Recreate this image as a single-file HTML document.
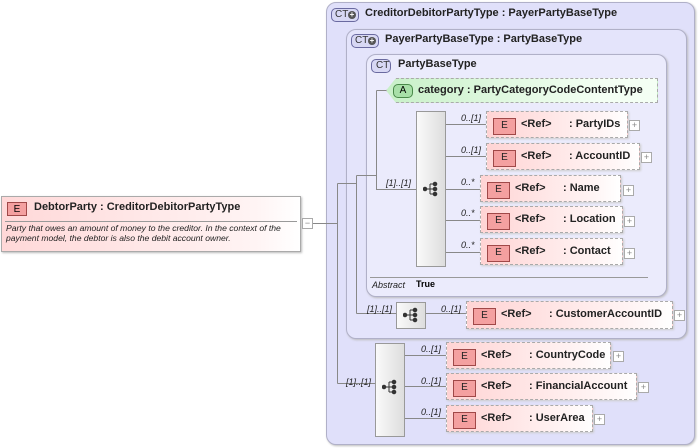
<!DOCTYPE html>
<html><head><meta charset="utf-8"><style>
body{margin:0;width:698px;height:448px;background:#fff;position:relative;overflow:hidden;font-family:"Liberation Sans",sans-serif;}
.a{position:absolute;box-sizing:border-box}
.ct{border:1px solid #b0b0c8;border-radius:10px;box-shadow:1px 1px 2px #bbb}
.ttl{font-size:11px;font-weight:bold;color:#222;position:absolute;white-space:nowrap}
.badge{position:absolute;border:1px solid #6a6aa0;border-radius:5px;background:#d8d8f4;font-size:10px;color:#333;line-height:12px;height:14px;padding-left:3px;box-sizing:border-box}
.badge i{position:absolute;right:2px;top:2px;width:8px;height:8px;border-radius:50%;background:#555;color:#fff;font-style:normal;font-size:8px;line-height:8px;text-align:center;font-weight:bold}
.el{border:1px dashed #aaa;background:linear-gradient(90deg,#ffd4d4,#fff4f4 80%,#fff);font-size:11px;font-weight:bold;color:#222;box-shadow:1px 1px 2px #ccc}
.E{position:absolute;left:6px;top:6px;width:21px;height:15px;border:1px solid #a04848;background:#f4a0a0;font-size:10px;font-weight:normal;text-align:center;line-height:14px;color:#222}
.el .r{position:absolute;left:34px;top:6px}
.el .n{position:absolute;top:6px;white-space:nowrap}
.plus{position:absolute;width:9px;height:9px;border:1px solid #aaa;background:#fff;font-size:9px;line-height:8px;text-align:center;color:#888}
.card{position:absolute;font-size:9px;font-style:italic;color:#222}
.seq{border:1px solid #999;background:linear-gradient(90deg,#fafafa,#ddd)}
</style></head><body>
<div class="a ct" style="left:326px;top:2px;width:369px;height:443px;background:#e0e0fa"></div>
<div class="badge" style="left:331px;top:8px;width:28px">CT<i>+</i></div>
<div class="ttl" style="left:365px;top:7px">CreditorDebitorPartyType : PayerPartyBaseType</div>
<div class="a ct" style="left:346px;top:29px;width:341px;height:310px;background:#e4e4fb"></div>
<div class="badge" style="left:351px;top:34px;width:28px">CT<i>+</i></div>
<div class="ttl" style="left:385px;top:33px">PayerPartyBaseType : PartyBaseType</div>
<div class="a ct" style="left:366px;top:54px;width:301px;height:243px;background:#ebebfc"></div>
<div class="badge" style="left:371px;top:59px;width:20px;padding-left:4px">CT</div>
<div class="ttl" style="left:398px;top:58px">PartyBaseType</div>
<div class="a" style="left:370px;top:277px;width:278px;height:1px;background:#999"></div>
<div class="card" style="left:372px;top:280px">Abstract</div>
<div class="a" style="left:416px;top:279px;font-size:9px;font-weight:bold">True</div>

<svg class="a" style="left:0;top:0" width="698" height="448">
<g stroke="#888" stroke-width="1" fill="none">
<path d="M312.5 223.5H337.5M337.5 183.5V383.5M337.5 183.5H356.5M356.5 175.5V313.5M356.5 175.5H376.5M376.5 90.5V189.5H416M376.5 90.5H388M356.5 313.5H396M426 313.5H466M337.5 383.5H375"/>
<path d="M446 124.5H486M446 156.5H486M446 189.5H480M446 220.5H480M446 252.5H480M405 355.5H446M405 386.5H446M405 418.5H446"/>
</g>
</svg>
<div class="card" style="left:386px;top:178px">[1]..[1]</div>
<div class="card" style="left:367px;top:304px">[1]..[1]</div>
<div class="card" style="left:346px;top:377px">[1]..[1]</div>

<div class="a" style="left:386px;top:78px;width:272px;height:25px;border:1px dashed #aaa;background:linear-gradient(90deg,#c8f0c8,#f4fff4 80%);clip-path:polygon(10px 0,100% 0,100% 100%,10px 100%,0 50%)"></div>
<div class="a" style="left:393px;top:84px;width:20px;height:14px;border:1px solid #4a8a4a;border-radius:5px;background:#a8e0a8;font-size:10px;text-align:center;line-height:12px">A</div>
<div class="ttl" style="left:418px;top:84px">category : PartyCategoryCodeContentType</div>

<div class="a seq" style="left:416px;top:111px;width:30px;height:156px"></div>
<div class="a seq" style="left:396px;top:302px;width:30px;height:27px"></div>
<div class="a seq" style="left:375px;top:343px;width:30px;height:94px"></div>
<svg class="a" style="left:423px;top:181px" width="16" height="16"><g fill="#333" stroke="#333"><circle cx="2" cy="8" r="1.8"/><path d="M2 8H7M7 3V13M7 3H12M7 8H12M7 13H12" fill="none"/><circle cx="12" cy="3" r="1.8"/><circle cx="12" cy="8" r="1.8"/><circle cx="12" cy="13" r="1.8"/></g></svg>
<svg class="a" style="left:403px;top:307px" width="16" height="16"><g fill="#333" stroke="#333"><circle cx="2" cy="8" r="1.8"/><path d="M2 8H7M7 3V13M7 3H12M7 8H12M7 13H12" fill="none"/><circle cx="12" cy="3" r="1.8"/><circle cx="12" cy="8" r="1.8"/><circle cx="12" cy="13" r="1.8"/></g></svg>
<svg class="a" style="left:382px;top:379px" width="16" height="16"><g fill="#333" stroke="#333"><circle cx="2" cy="8" r="1.8"/><path d="M2 8H7M7 3V13M7 3H12M7 8H12M7 13H12" fill="none"/><circle cx="12" cy="3" r="1.8"/><circle cx="12" cy="8" r="1.8"/><circle cx="12" cy="13" r="1.8"/></g></svg>

<div class="card" style="left:461px;top:113px">0..[1]</div>
<div class="a el" style="left:486px;top:111px;width:142px;height:27px"><div class="E">E</div><span class="r">&lt;Ref&gt;</span><span class="n" style="left:82px">: PartyIDs</span></div>
<div class="plus" style="left:629px;top:120px">+</div>
<div class="card" style="left:461px;top:145px">0..[1]</div>
<div class="a el" style="left:486px;top:143px;width:154px;height:27px"><div class="E">E</div><span class="r">&lt;Ref&gt;</span><span class="n" style="left:82px">: AccountID</span></div>
<div class="plus" style="left:641px;top:152px">+</div>
<div class="card" style="left:461px;top:177px">0..*</div>
<div class="a el" style="left:480px;top:175px;width:141px;height:27px"><div class="E">E</div><span class="r">&lt;Ref&gt;</span><span class="n" style="left:82px">: Name</span></div>
<div class="plus" style="left:623px;top:185px">+</div>
<div class="card" style="left:461px;top:208px">0..*</div>
<div class="a el" style="left:480px;top:206px;width:143px;height:27px"><div class="E">E</div><span class="r">&lt;Ref&gt;</span><span class="n" style="left:82px">: Location</span></div>
<div class="plus" style="left:624px;top:216px">+</div>
<div class="card" style="left:461px;top:240px">0..*</div>
<div class="a el" style="left:480px;top:238px;width:143px;height:27px"><div class="E">E</div><span class="r">&lt;Ref&gt;</span><span class="n" style="left:82px">: Contact</span></div>
<div class="plus" style="left:624px;top:248px">+</div>

<div class="card" style="left:441px;top:304px">0..[1]</div>
<div class="a el" style="left:466px;top:301px;width:207px;height:28px"><div class="E">E</div><span class="r">&lt;Ref&gt;</span><span class="n" style="left:82px">: CustomerAccountID</span></div>
<div class="plus" style="left:674px;top:310px">+</div>

<div class="card" style="left:421px;top:344px">0..[1]</div>
<div class="a el" style="left:446px;top:342px;width:165px;height:27px"><div class="E">E</div><span class="r">&lt;Ref&gt;</span><span class="n" style="left:82px">: CountryCode</span></div>
<div class="plus" style="left:613px;top:351px">+</div>
<div class="card" style="left:421px;top:376px">0..[1]</div>
<div class="a el" style="left:446px;top:373px;width:191px;height:27px"><div class="E">E</div><span class="r">&lt;Ref&gt;</span><span class="n" style="left:82px">: FinancialAccount</span></div>
<div class="plus" style="left:638px;top:382px">+</div>
<div class="card" style="left:421px;top:407px">0..[1]</div>
<div class="a el" style="left:446px;top:405px;width:147px;height:27px"><div class="E">E</div><span class="r">&lt;Ref&gt;</span><span class="n" style="left:82px">: UserArea</span></div>
<div class="plus" style="left:594px;top:414px">+</div>

<div class="a" style="left:1px;top:196px;width:300px;height:56px;border:1px solid #aaa;background:linear-gradient(90deg,#ffd8d8,#fff4f4 85%,#fff);box-shadow:1px 1px 2px #bbb"></div>
<div class="a" style="left:7px;top:202px;width:20px;height:14px;border:1px solid #a04848;background:#f4a0a0;font-size:10px;text-align:center;line-height:13px">E</div>
<div class="ttl" style="left:34px;top:201px">DebtorParty : CreditorDebitorPartyType</div>
<div class="a" style="left:5px;top:221px;width:292px;height:1px;background:#999"></div>
<div class="a" style="left:6px;top:223px;font-size:8.6px;font-style:italic;color:#222;line-height:10px;width:295px">Party that owes an amount of money to the creditor. In the context of the payment model, the debtor is also the debit account owner.</div>
<div class="plus" style="left:302px;top:218px">−</div>
</body></html>
